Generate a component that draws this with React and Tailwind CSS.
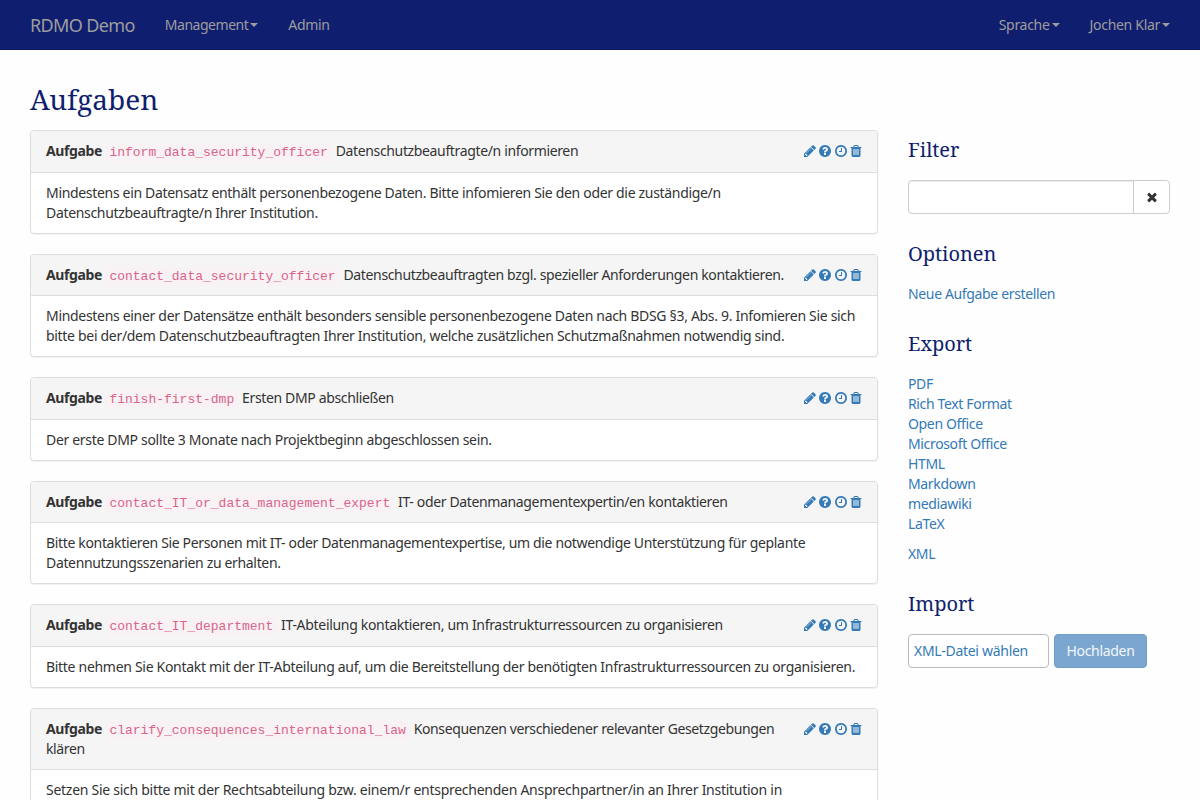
import React from 'react';

const ICONS = {
  pencil:
    'M491 1536l91-91-235-235-91 91v107h128v128h107zm523-928q0-22-22-22-10 0-17 7l-542 542q-7 7-7 17 0 22 22 22 10 0 17-7l542-542q7-7 7-17zm-54-192l416 416-832 832h-416v-416zm683 96q0 53-37 90l-166 166-416-416 166-165q36-38 90-38 53 0 91 38l235 234q37 39 37 91z',
  question:
    'M1024 1376v-192q0-14-9-23t-23-9h-192q-14 0-23 9t-9 23v192q0 14 9 23t23 9h192q14 0 23-9t9-23zm256-672q0-88-55.5-163t-138.5-116-170-41q-243 0-371 213-15 24 8 42l132 100q7 6 19 6 16 0 25-12 53-68 86-92 34-24 86-24 48 0 85.5 26t37.5 59q0 38-20 61t-68 45q-63 28-115.5 86.5t-52.5 125.5v36q0 14 9 23t23 9h192q14 0 23-9t9-23q0-19 21.5-49.5t54.5-49.5q32-18 49-28.5t46-35 44.5-48 28-60.5 12.5-81zm384 192q0 209-103 385.5t-279.5 279.5-385.5 103-385.5-103-279.5-279.5-103-385.5 103-385.5 279.5-279.5 385.5-103 385.5 103 279.5 279.5 103 385.5z',
  clock:
    'M1024 544v448q0 14-9 23t-23 9h-320q-14 0-23-9t-9-23v-64q0-14 9-23t23-9h224v-352q0-14 9-23t23-9h64q14 0 23 9t9 23zm416 352q0-148-73-273t-198-198-273-73-273 73-198 198-73 273 73 273 198 198 273 73 273-73 198-198 73-273zm224 0q0 209-103 385.5t-279.5 279.5-385.5 103-385.5-103-279.5-279.5-103-385.5 103-385.5 279.5-279.5 385.5-103 385.5 103 279.5 279.5 103 385.5z',
  trash:
    'M704 1376v-704q0-14-9-23t-23-9h-64q-14 0-23 9t-9 23v704q0 14 9 23t23 9h64q14 0 23-9t9-23zm256 0v-704q0-14-9-23t-23-9h-64q-14 0-23 9t-9 23v704q0 14 9 23t23 9h64q14 0 23-9t9-23zm256 0v-704q0-14-9-23t-23-9h-64q-14 0-23 9t-9 23v704q0 14 9 23t23 9h64q14 0 23-9t9-23zm-544-992h448l-48-117q-7-9-17-11h-317q-10 2-17 11zm928 32v64q0 14-9 23t-23 9h-96v948q0 83-47 143.5t-113 60.5h-832q-66 0-113-58.5t-47-141.5v-952h-96q-14 0-23-9t-9-23v-64q0-14 9-23t23-9h309l70-167q15-37 54-63t79-26h320q40 0 79 26t54 63l70 167h309q14 0 23 9t9 23z',
  times:
    'M1490 1322q0 40-28 68l-136 136q-28 28-68 28t-68-28l-294-294-294 294q-28 28-68 28t-68-28l-136-136q-28-28-28-68t28-68l294-294-294-294q-28-28-28-68t28-68l136-136q28-28 68-28t68 28l294 294 294-294q28-28 68-28t68 28l136 136q28 28 28 68t-28 68l-294 294 294 294q28 28 28 68z',
};

function Icon({ name }) {
  return (
    <svg viewBox="0 0 1792 1792" className="size-3.5 shrink-0" fill="currentColor" aria-hidden="true">
      <path d={ICONS[name]} />
    </svg>
  );
}

function Caret() {
  return <span className="ml-0.5 mt-px size-0 border-x-4 border-t-4 border-x-transparent border-t-current" />;
}

const TASKS = [
  {
    key: 'inform_data_security_officer',
    title: 'Datenschutzbeauftragte/n informieren',
    text: ['Mindestens ein Datensatz enthält personenbezogene Daten. Bitte infomieren Sie den oder die zuständige/n', 'Datenschutzbeauftragte/n Ihrer Institution.'],
    tracking: 'tracking-[-0.32px]',
  },
  {
    key: 'contact_data_security_officer',
    title: 'Datenschutzbeauftragten bzgl. spezieller Anforderungen kontaktieren.',
    text: ['Mindestens einer der Datensätze enthält besonders sensible personenbezogene Daten nach BDSG §3, Abs. 9. Infomieren Sie sich', 'bitte bei der/dem Datenschutzbeauftragten Ihrer Institution, welche zusätzlichen Schutzmaßnahmen notwendig sind.'],
    tracking: 'tracking-[-0.31px]',
  },
  {
    key: 'finish-first-dmp',
    title: 'Ersten DMP abschließen',
    text: ['Der erste DMP sollte 3 Monate nach Projektbeginn abgeschlossen sein.'],
    tracking: 'tracking-[-0.32px]',
  },
  {
    key: 'contact_IT_or_data_management_expert',
    title: 'IT- oder Datenmanagementexpertin/en kontaktieren',
    text: ['Bitte kontaktieren Sie Personen mit IT- oder Datenmanagementexpertise, um die notwendige Unterstützung für geplante', 'Datennutzungsszenarien zu erhalten.'],
    tracking: 'tracking-[-0.34px]',
  },
  {
    key: 'contact_IT_department',
    title: 'IT-Abteilung kontaktieren, um Infrastrukturressourcen zu organisieren',
    text: ['Bitte nehmen Sie Kontakt mit der IT-Abteilung auf, um die Bereitstellung der benötigten Infrastrukturressourcen zu organisieren.'],
    titleTracking: 'tracking-[-0.31px]',
    tracking: 'tracking-[-0.3px]',
  },
  {
    key: 'clarify_consequences_international_law',
    title: 'Konsequenzen verschiedener relevanter Gesetzgebungen klären',
    text: ['Setzen Sie sich bitte mit der Rechtsabteilung bzw. einem/r entsprechenden Ansprechpartner/in an Ihrer Institution in'],
    titleTracking: 'tracking-[-0.38px]',
    tracking: 'tracking-[-0.27px]',
  },
];

const EXPORTS = ['PDF', 'Rich Text Format', 'Open Office', 'Microsoft Office', 'HTML', 'Markdown', 'mediawiki', 'LaTeX'];

function TaskPanel({ task }) {
  return (
    <section className="mb-5 rounded-[4px] border border-[#ddd] bg-white shadow-[0_1px_1px_rgba(0,0,0,0.05)]">
      <header className="flex items-start rounded-t-[3px] border-b border-[#ddd] bg-[#f5f5f5] px-[15px] pt-2.5 pb-[10.52px]">
        <div className="min-w-0 flex-1">
          <strong className="tracking-[-0.4px]">Aufgabe</strong>{' '}
          <code className="mr-[0.5px] ml-[0.2px] rounded-[4px] bg-[#f9f2f4] px-1 py-0.5 font-['Liberation_Mono',monospace] text-[13px] leading-none tracking-normal text-[#d9638a]">
            {task.key}
          </code>{' '}
          <span className={task.titleTracking || 'tracking-[-0.355px]'}>{task.title}</span>
        </div>
        <div className="-mr-px flex h-5 items-center gap-[1.4px] pl-3 text-[#337ab7]">
          <Icon name="pencil" />
          <Icon name="question" />
          <Icon name="clock" />
          <Icon name="trash" />
        </div>
      </header>
      <div className={`px-[15px] py-2.5 ${task.tracking}`}>
        {task.text.map((line) => <p key={line} className="whitespace-nowrap">{line}</p>)}
      </div>
    </section>
  );
}

function SideHeading({ children }) {
  return (
    <h2 className="mb-[19px] font-['Noto_Serif',serif] text-xl leading-[22px] tracking-[-0.03px] text-[#101e70]">
      {children}
    </h2>
  );
}

export default function App() {
  return (
    <div className="h-[800px] w-[1200px] overflow-hidden bg-[#fefefe] font-['Noto_Sans',sans-serif] text-sm leading-5 tracking-[-0.3px] text-[#333]">
      <nav className="flex h-[50px] items-center border-b border-[#0d1860] bg-[#101e70] px-[30px] text-[#9d9d9d]">
        <a className="mr-[30px] text-lg tracking-[-0.62px]">RDMO Demo</a>
        <a className="mr-[30px] flex items-center tracking-[-0.48px]">Management<Caret /></a>
        <a>Admin</a>
        <a className="mr-[30px] ml-auto flex items-center">Sprache<Caret /></a>
        <a className="flex items-center">Jochen Klar<Caret /></a>
      </nav>
      <div className="flex gap-[30px] px-[30px]">
        <main className="w-[848px] shrink-0 pt-[34px]">
          <h1 className="mb-4 font-['Noto_Serif',serif] text-[28px] leading-[30px] tracking-normal text-[#101e70]">Aufgaben</h1>
          {TASKS.map((task) => <TaskPanel key={task.key} task={task} />)}
        </main>
        <aside className="w-[262px] shrink-0 pt-[89px] tracking-[-0.35px]">
          <SideHeading>Filter</SideHeading>
          <div className="mb-[29px] flex h-[34px]">
            <input aria-label="Filter" className="min-w-0 flex-1 rounded-l-[4px] border border-[#ccc] bg-white shadow-[inset_0_1px_1px_rgba(0,0,0,0.075)]" />
            <button className="-ml-px flex w-[37px] items-center justify-center rounded-r-[4px] border border-[#ccc] bg-white" aria-label="×">
              <Icon name="times" />
            </button>
          </div>
          <SideHeading>Optionen</SideHeading>
          <a className="mb-[29px] block text-[#337ab7]">Neue Aufgabe erstellen</a>
          <SideHeading>Export</SideHeading>
          <ul className="mb-2.5 text-[#337ab7]">
            {EXPORTS.map((e) => <li key={e}>{e}</li>)}
          </ul>
          <a className="mb-[29px] block text-[#337ab7]">XML</a>
          <SideHeading>Import</SideHeading>
          <div className="flex gap-[5px] tracking-[-0.3px]">
            <div className="flex h-[34px] w-[141px] items-center rounded-[4px] border border-[#bbb] bg-white pl-[5px] text-[#337ab7]">XML-Datei wählen</div>
            <button className="h-[34px] w-[93px] rounded-[4px] border border-[#6d9fcc] bg-[#7aa6cf] text-[#f4f7fb]">Hochladen</button>
          </div>
        </aside>
      </div>
    </div>
  );
}
